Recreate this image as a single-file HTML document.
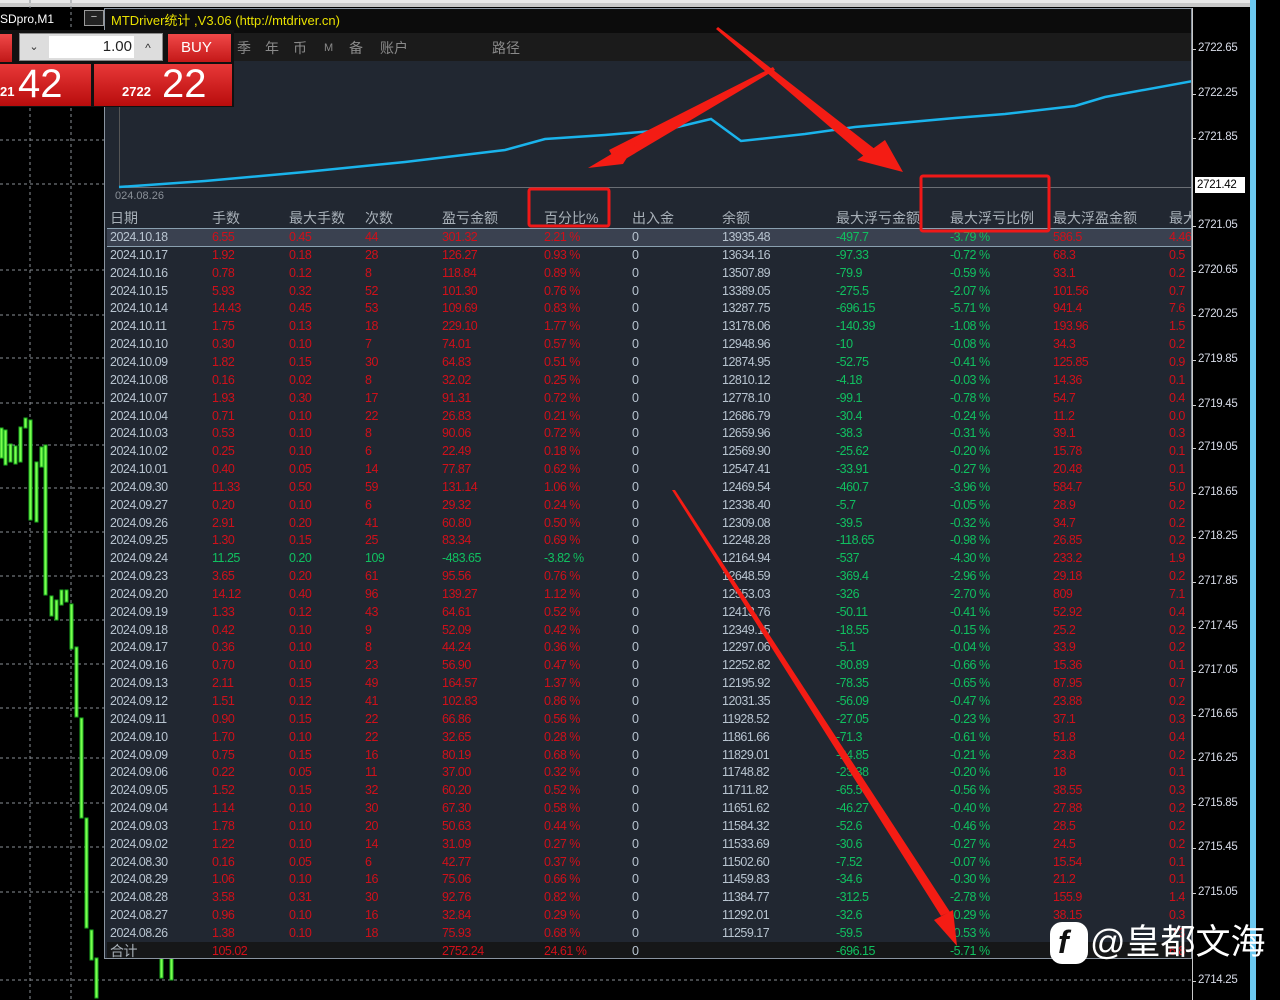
<!DOCTYPE html>
<html><head><meta charset="utf-8"><style>
*{margin:0;padding:0;box-sizing:border-box}
body{width:1280px;height:1000px;background:#000;position:relative;overflow:hidden;font-family:"Liberation Sans","Noto Sans CJK SC",sans-serif}
.abs{position:absolute}
#panel{left:104px;top:8px;width:1088px;height:951px;background:#212731;border:1px solid #8a94a0;overflow:hidden}
#title{left:0;top:0;width:1088px;height:24px;background:#0c0c0c;color:#e8e000;font-size:13px;line-height:24px;padding-left:6px}
#tb{left:0;top:24px;width:1088px;height:28px;background:#1b1b1b;color:#8a8a8a;font-size:14px;line-height:30px}
table{position:absolute;left:2px;top:199px;border-collapse:collapse;table-layout:fixed;width:1100px;font-size:12.5px;letter-spacing:-0.5px}
td{height:17.85px;line-height:17px;padding:0 0 0 3px;white-space:nowrap;overflow:hidden;color:#d0101a}
td:first-child{color:#b8c4d0}
td:nth-child(7),td:nth-child(8){color:#b8c4d0}
td:nth-child(9),td:nth-child(10){color:#10c060}
tr.h td{color:#a8b0b8;font-size:14px;letter-spacing:0;height:20px;line-height:20px;border-bottom:1px solid #8aa0b0}
tr.s td{background:#3a4150;border-bottom:1px solid #8aa0b0}
tr.g td{color:#10c060}
tr.g td:first-child{color:#b8c4d0}
tr.t td{background:#161718;height:18px}
tr.t td:first-child{color:#a8b0b8;font-size:14px}
.ax{position:absolute;left:1198px;color:#d8dce8;font-size:11.5px;letter-spacing:-0.3px}
.ax:before{content:"";position:absolute;left:-6px;top:7px;width:4px;height:1px;background:#ccc}
</style></head><body>
<div class="abs" style="left:0;top:0;width:1250px;height:7px;background:#c8c8c8"></div>
<div class="abs" style="left:0;top:0;width:1250px;height:3px;background:#e8e8e8"></div>
<svg class="abs" style="left:0;top:0" width="1280" height="1000">
<g stroke="#8a8f96" stroke-dasharray="3,3" stroke-width="1">
<line x1="30" y1="0" x2="30" y2="1000"/><line x1="71" y1="0" x2="71" y2="1000"/>
<line x1="0" y1="140" x2="104" y2="140"/><line x1="0" y1="184" x2="104" y2="184"/>
<line x1="0" y1="270" x2="104" y2="270"/><line x1="0" y1="315" x2="104" y2="315"/>
<line x1="0" y1="358" x2="104" y2="358"/><line x1="0" y1="403" x2="104" y2="403"/>
<line x1="0" y1="445" x2="104" y2="445"/><line x1="0" y1="488" x2="104" y2="488"/>
<line x1="0" y1="532" x2="104" y2="532"/><line x1="0" y1="576" x2="104" y2="576"/>
<line x1="0" y1="620" x2="104" y2="620"/><line x1="0" y1="664" x2="104" y2="664"/>
<line x1="0" y1="708" x2="104" y2="708"/><line x1="0" y1="758" x2="104" y2="758"/>
<line x1="0" y1="803" x2="104" y2="803"/><line x1="0" y1="847" x2="104" y2="847"/>
<line x1="0" y1="892" x2="104" y2="892"/><line x1="0" y1="980" x2="1192" y2="980"/>
</g>
<g fill="#7cff50" stroke="#1cb020" stroke-width="1">
<rect x="0" y="428" width="3" height="30"/><rect x="4" y="430" width="3" height="35"/><rect x="9" y="444" width="3" height="18"/><rect x="14" y="446" width="3" height="18"/><rect x="19" y="427" width="3" height="35"/><rect x="24" y="418" width="3" height="10"/><rect x="29" y="420" width="3" height="100"/><rect x="35" y="462" width="3" height="60"/><rect x="40" y="447" width="3" height="20"/><rect x="44" y="445" width="3" height="150"/><rect x="50" y="596" width="3" height="20"/><rect x="55" y="600" width="3" height="20"/><rect x="60" y="590" width="3" height="15"/><rect x="65" y="590" width="3" height="12"/><rect x="70" y="604" width="3" height="45"/><rect x="75" y="647" width="3" height="70"/><rect x="80" y="718" width="3" height="100"/><rect x="85" y="818" width="3" height="110"/><rect x="90" y="930" width="3" height="30"/><rect x="95" y="958" width="3" height="40"/><rect x="160" y="958" width="3" height="20"/><rect x="170" y="958" width="3" height="22"/>
</g>
</svg>
<div class="abs" style="left:0;top:8px;width:56px;height:22px;background:#000;color:#fff;font-size:12px;line-height:22px">SDpro,M1</div>
<div class="abs" style="left:84px;top:10px;width:20px;height:16px;border:1px solid #999;background:#222;color:#ccc;font-size:11px;text-align:center;line-height:12px">−</div>
<div id="panel" class="abs">
<div id="title" class="abs">MTDriver统计 ,V3.06 (http://mtdriver.cn)</div>
<div id="tb" class="abs"><span style="position:absolute;left:132px">季</span><span style="position:absolute;left:160px">年</span><span style="position:absolute;left:188px">币</span><span style="position:absolute;left:219px;font-size:11px">M</span><span style="position:absolute;left:244px">备</span><span style="position:absolute;left:275px">账户</span><span style="position:absolute;left:387px">路径</span></div>
<div class="abs" style="left:14px;top:56px;width:1px;height:122px;background:#555"></div>
<div class="abs" style="left:14px;top:178px;width:1074px;height:1px;background:#6a6e74"></div>
<div class="abs" style="left:10px;top:181px;color:#8a9098;font-size:11px">024.08.26</div>
<svg class="abs" style="left:0;top:0" width="1088" height="200"><polyline fill="none" stroke="#1ab4ec" stroke-width="2.5" points="14,178 100,172 200,163 300,153 400,141 440,130 500,126 560,121 606,110 636,132 700,125 750,118 850,109 900,105 970,97 1000,88 1088,72"/></svg>
<table>
<colgroup><col style="width:102px"><col style="width:77px"><col style="width:76px"><col style="width:77px"><col style="width:102px"><col style="width:88px"><col style="width:90px"><col style="width:114px"><col style="width:114px"><col style="width:103px"><col style="width:116px"><col style="width:41px"></colgroup>
<tr class="h"><td>日期</td><td>手数</td><td>最大手数</td><td>次数</td><td>盈亏金额</td><td>百分比%</td><td>出入金</td><td>余额</td><td>最大浮亏金额</td><td>最大浮亏比例</td><td>最大浮盈金额</td><td>最大</td></tr>
<tr class="s"><td>2024.10.18</td><td>6.55</td><td>0.45</td><td>44</td><td>301.32</td><td>2.21 %</td><td>0</td><td>13935.48</td><td>-497.7</td><td>-3.79 %</td><td>586.5</td><td>4.46</td></tr>
<tr><td>2024.10.17</td><td>1.92</td><td>0.18</td><td>28</td><td>126.27</td><td>0.93 %</td><td>0</td><td>13634.16</td><td>-97.33</td><td>-0.72 %</td><td>68.3</td><td>0.5</td></tr>
<tr><td>2024.10.16</td><td>0.78</td><td>0.12</td><td>8</td><td>118.84</td><td>0.89 %</td><td>0</td><td>13507.89</td><td>-79.9</td><td>-0.59 %</td><td>33.1</td><td>0.2</td></tr>
<tr><td>2024.10.15</td><td>5.93</td><td>0.32</td><td>52</td><td>101.30</td><td>0.76 %</td><td>0</td><td>13389.05</td><td>-275.5</td><td>-2.07 %</td><td>101.56</td><td>0.7</td></tr>
<tr><td>2024.10.14</td><td>14.43</td><td>0.45</td><td>53</td><td>109.69</td><td>0.83 %</td><td>0</td><td>13287.75</td><td>-696.15</td><td>-5.71 %</td><td>941.4</td><td>7.6</td></tr>
<tr><td>2024.10.11</td><td>1.75</td><td>0.13</td><td>18</td><td>229.10</td><td>1.77 %</td><td>0</td><td>13178.06</td><td>-140.39</td><td>-1.08 %</td><td>193.96</td><td>1.5</td></tr>
<tr><td>2024.10.10</td><td>0.30</td><td>0.10</td><td>7</td><td>74.01</td><td>0.57 %</td><td>0</td><td>12948.96</td><td>-10</td><td>-0.08 %</td><td>34.3</td><td>0.2</td></tr>
<tr><td>2024.10.09</td><td>1.82</td><td>0.15</td><td>30</td><td>64.83</td><td>0.51 %</td><td>0</td><td>12874.95</td><td>-52.75</td><td>-0.41 %</td><td>125.85</td><td>0.9</td></tr>
<tr><td>2024.10.08</td><td>0.16</td><td>0.02</td><td>8</td><td>32.02</td><td>0.25 %</td><td>0</td><td>12810.12</td><td>-4.18</td><td>-0.03 %</td><td>14.36</td><td>0.1</td></tr>
<tr><td>2024.10.07</td><td>1.93</td><td>0.30</td><td>17</td><td>91.31</td><td>0.72 %</td><td>0</td><td>12778.10</td><td>-99.1</td><td>-0.78 %</td><td>54.7</td><td>0.4</td></tr>
<tr><td>2024.10.04</td><td>0.71</td><td>0.10</td><td>22</td><td>26.83</td><td>0.21 %</td><td>0</td><td>12686.79</td><td>-30.4</td><td>-0.24 %</td><td>11.2</td><td>0.0</td></tr>
<tr><td>2024.10.03</td><td>0.53</td><td>0.10</td><td>8</td><td>90.06</td><td>0.72 %</td><td>0</td><td>12659.96</td><td>-38.3</td><td>-0.31 %</td><td>39.1</td><td>0.3</td></tr>
<tr><td>2024.10.02</td><td>0.25</td><td>0.10</td><td>6</td><td>22.49</td><td>0.18 %</td><td>0</td><td>12569.90</td><td>-25.62</td><td>-0.20 %</td><td>15.78</td><td>0.1</td></tr>
<tr><td>2024.10.01</td><td>0.40</td><td>0.05</td><td>14</td><td>77.87</td><td>0.62 %</td><td>0</td><td>12547.41</td><td>-33.91</td><td>-0.27 %</td><td>20.48</td><td>0.1</td></tr>
<tr><td>2024.09.30</td><td>11.33</td><td>0.50</td><td>59</td><td>131.14</td><td>1.06 %</td><td>0</td><td>12469.54</td><td>-460.7</td><td>-3.96 %</td><td>584.7</td><td>5.0</td></tr>
<tr><td>2024.09.27</td><td>0.20</td><td>0.10</td><td>6</td><td>29.32</td><td>0.24 %</td><td>0</td><td>12338.40</td><td>-5.7</td><td>-0.05 %</td><td>28.9</td><td>0.2</td></tr>
<tr><td>2024.09.26</td><td>2.91</td><td>0.20</td><td>41</td><td>60.80</td><td>0.50 %</td><td>0</td><td>12309.08</td><td>-39.5</td><td>-0.32 %</td><td>34.7</td><td>0.2</td></tr>
<tr><td>2024.09.25</td><td>1.30</td><td>0.15</td><td>25</td><td>83.34</td><td>0.69 %</td><td>0</td><td>12248.28</td><td>-118.65</td><td>-0.98 %</td><td>26.85</td><td>0.2</td></tr>
<tr class="g"><td>2024.09.24</td><td>11.25</td><td>0.20</td><td>109</td><td>-483.65</td><td>-3.82 %</td><td style="color:#b8c4d0">0</td><td style="color:#b8c4d0">12164.94</td><td>-537</td><td>-4.30 %</td><td style="color:#d0101a">233.2</td><td style="color:#d0101a">1.9</td></tr>
<tr><td>2024.09.23</td><td>3.65</td><td>0.20</td><td>61</td><td>95.56</td><td>0.76 %</td><td>0</td><td>12648.59</td><td>-369.4</td><td>-2.96 %</td><td>29.18</td><td>0.2</td></tr>
<tr><td>2024.09.20</td><td>14.12</td><td>0.40</td><td>96</td><td>139.27</td><td>1.12 %</td><td>0</td><td>12553.03</td><td>-326</td><td>-2.70 %</td><td>809</td><td>7.1</td></tr>
<tr><td>2024.09.19</td><td>1.33</td><td>0.12</td><td>43</td><td>64.61</td><td>0.52 %</td><td>0</td><td>12413.76</td><td>-50.11</td><td>-0.41 %</td><td>52.92</td><td>0.4</td></tr>
<tr><td>2024.09.18</td><td>0.42</td><td>0.10</td><td>9</td><td>52.09</td><td>0.42 %</td><td>0</td><td>12349.15</td><td>-18.55</td><td>-0.15 %</td><td>25.2</td><td>0.2</td></tr>
<tr><td>2024.09.17</td><td>0.36</td><td>0.10</td><td>8</td><td>44.24</td><td>0.36 %</td><td>0</td><td>12297.06</td><td>-5.1</td><td>-0.04 %</td><td>33.9</td><td>0.2</td></tr>
<tr><td>2024.09.16</td><td>0.70</td><td>0.10</td><td>23</td><td>56.90</td><td>0.47 %</td><td>0</td><td>12252.82</td><td>-80.89</td><td>-0.66 %</td><td>15.36</td><td>0.1</td></tr>
<tr><td>2024.09.13</td><td>2.11</td><td>0.15</td><td>49</td><td>164.57</td><td>1.37 %</td><td>0</td><td>12195.92</td><td>-78.35</td><td>-0.65 %</td><td>87.95</td><td>0.7</td></tr>
<tr><td>2024.09.12</td><td>1.51</td><td>0.12</td><td>41</td><td>102.83</td><td>0.86 %</td><td>0</td><td>12031.35</td><td>-56.09</td><td>-0.47 %</td><td>23.88</td><td>0.2</td></tr>
<tr><td>2024.09.11</td><td>0.90</td><td>0.15</td><td>22</td><td>66.86</td><td>0.56 %</td><td>0</td><td>11928.52</td><td>-27.05</td><td>-0.23 %</td><td>37.1</td><td>0.3</td></tr>
<tr><td>2024.09.10</td><td>1.70</td><td>0.10</td><td>22</td><td>32.65</td><td>0.28 %</td><td>0</td><td>11861.66</td><td>-71.3</td><td>-0.61 %</td><td>51.8</td><td>0.4</td></tr>
<tr><td>2024.09.09</td><td>0.75</td><td>0.15</td><td>16</td><td>80.19</td><td>0.68 %</td><td>0</td><td>11829.01</td><td>-24.85</td><td>-0.21 %</td><td>23.8</td><td>0.2</td></tr>
<tr><td>2024.09.06</td><td>0.22</td><td>0.05</td><td>11</td><td>37.00</td><td>0.32 %</td><td>0</td><td>11748.82</td><td>-23.38</td><td>-0.20 %</td><td>18</td><td>0.1</td></tr>
<tr><td>2024.09.05</td><td>1.52</td><td>0.15</td><td>32</td><td>60.20</td><td>0.52 %</td><td>0</td><td>11711.82</td><td>-65.5</td><td>-0.56 %</td><td>38.55</td><td>0.3</td></tr>
<tr><td>2024.09.04</td><td>1.14</td><td>0.10</td><td>30</td><td>67.30</td><td>0.58 %</td><td>0</td><td>11651.62</td><td>-46.27</td><td>-0.40 %</td><td>27.88</td><td>0.2</td></tr>
<tr><td>2024.09.03</td><td>1.78</td><td>0.10</td><td>20</td><td>50.63</td><td>0.44 %</td><td>0</td><td>11584.32</td><td>-52.6</td><td>-0.46 %</td><td>28.5</td><td>0.2</td></tr>
<tr><td>2024.09.02</td><td>1.22</td><td>0.10</td><td>14</td><td>31.09</td><td>0.27 %</td><td>0</td><td>11533.69</td><td>-30.6</td><td>-0.27 %</td><td>24.5</td><td>0.2</td></tr>
<tr><td>2024.08.30</td><td>0.16</td><td>0.05</td><td>6</td><td>42.77</td><td>0.37 %</td><td>0</td><td>11502.60</td><td>-7.52</td><td>-0.07 %</td><td>15.54</td><td>0.1</td></tr>
<tr><td>2024.08.29</td><td>1.06</td><td>0.10</td><td>16</td><td>75.06</td><td>0.66 %</td><td>0</td><td>11459.83</td><td>-34.6</td><td>-0.30 %</td><td>21.2</td><td>0.1</td></tr>
<tr><td>2024.08.28</td><td>3.58</td><td>0.31</td><td>30</td><td>92.76</td><td>0.82 %</td><td>0</td><td>11384.77</td><td>-312.5</td><td>-2.78 %</td><td>155.9</td><td>1.4</td></tr>
<tr><td>2024.08.27</td><td>0.96</td><td>0.10</td><td>16</td><td>32.84</td><td>0.29 %</td><td>0</td><td>11292.01</td><td>-32.6</td><td>-0.29 %</td><td>38.15</td><td>0.3</td></tr>
<tr><td>2024.08.26</td><td>1.38</td><td>0.10</td><td>18</td><td>75.93</td><td>0.68 %</td><td>0</td><td>11259.17</td><td>-59.5</td><td>-0.53 %</td><td>44.8</td><td>0.3</td></tr>
<tr class="t"><td>合计</td><td>105.02</td><td></td><td></td><td>2752.24</td><td>24.61 %</td><td>0</td><td></td><td>-696.15</td><td>-5.71 %</td><td>444.4</td><td>6.8</td></tr>
</table>
</div>
<div class="abs" style="left:1192px;top:8px;width:1px;height:992px;background:#c8c8c8"></div>
<div class="abs" style="left:1250px;top:0;width:6px;height:1000px;background:#6cc8f0"></div>
<div class="ax" style="top:42px">2722.65</div><div class="ax" style="top:87px">2722.25</div><div class="ax" style="top:131px">2721.85</div>
<div class="abs" style="left:1195px;top:177px;width:50px;height:16px;background:#fff;color:#000;font-size:11.5px;letter-spacing:-0.3px;line-height:16px;padding-left:2px">2721.42</div>
<div class="ax" style="top:219px">2721.05</div><div class="ax" style="top:264px">2720.65</div><div class="ax" style="top:308px">2720.25</div><div class="ax" style="top:353px">2719.85</div><div class="ax" style="top:398px">2719.45</div><div class="ax" style="top:441px">2719.05</div><div class="ax" style="top:486px">2718.65</div><div class="ax" style="top:530px">2718.25</div><div class="ax" style="top:575px">2717.85</div><div class="ax" style="top:620px">2717.45</div><div class="ax" style="top:664px">2717.05</div><div class="ax" style="top:708px">2716.65</div><div class="ax" style="top:752px">2716.25</div><div class="ax" style="top:797px">2715.85</div><div class="ax" style="top:841px">2715.45</div><div class="ax" style="top:886px">2715.05</div><div class="ax" style="top:974px">2714.25</div>
<div class="abs" style="left:0;top:30px;width:234px;height:77px;background:#111"></div>
<div class="abs" style="left:0;top:34px;width:12px;height:28px;background:linear-gradient(#f04848,#c01818)"></div>
<div class="abs" style="left:19px;top:33px;width:144px;height:28px;background:#ddd;border:1px solid #888"></div>
<div class="abs" style="left:22px;top:36px;width:24px;height:22px;color:#333;font-size:11px;text-align:center;line-height:22px">⌄</div>
<div class="abs" style="left:49px;top:36px;width:85px;height:22px;background:#fff;color:#222;font-size:15px;text-align:right;line-height:22px;padding-right:2px">1.00</div>
<div class="abs" style="left:137px;top:36px;width:22px;height:22px;color:#333;font-size:12px;text-align:center;line-height:24px">^</div>
<div class="abs" style="left:168px;top:34px;width:63px;height:28px;background:linear-gradient(#f04848,#c41818);color:#fff;font-size:15px;line-height:28px;padding-left:13px">BUY</div>
<div class="abs" style="left:0;top:64px;width:91px;height:42px;background:linear-gradient(#e83838,#b80c0c);color:#fff"><span style="position:absolute;left:0;top:20px;font-size:13px;font-weight:bold">21</span><span style="position:absolute;left:18px;top:-2px;font-size:40px">42</span></div>
<div class="abs" style="left:94px;top:64px;width:138px;height:42px;background:linear-gradient(#e83838,#b80c0c);color:#fff"><span style="position:absolute;left:28px;top:20px;font-size:13px;font-weight:bold">2722</span><span style="position:absolute;left:68px;top:-2px;font-size:40px">22</span></div>
<svg class="abs" style="left:0;top:0" width="1280" height="1000">
<g fill="none" stroke="#f01818" stroke-width="3"><rect x="529" y="189" width="80" height="37" rx="2"/><rect x="921" y="176" width="128" height="55" rx="2"/></g>
<g fill="#f41c14">
<polygon points="773,67 609,150 617,164 775,70"/><polygon points="588,168 640,137 623,164"/>
<polygon points="718,27 876,150 866,158 716,29"/><polygon points="903,172 885,140 857,160"/>
<polygon points="672,490 941,916 950,912 675,490"/><polygon points="957,946 953,910 934,920"/>
</g>
</svg>
<div class="abs" style="left:1050px;top:922px;width:38px;height:42px;background:#fff;border-radius:12px"></div>
<div class="abs" style="left:1058px;top:922px;font-size:32px;color:#111;font-weight:bold;font-style:italic;line-height:40px">f</div>
<div class="abs" style="left:1090px;top:918px;font-size:35px;color:#fff;line-height:50px;font-family:'Liberation Sans','Noto Sans CJK SC',sans-serif">@皇都文海</div>
</body></html>
